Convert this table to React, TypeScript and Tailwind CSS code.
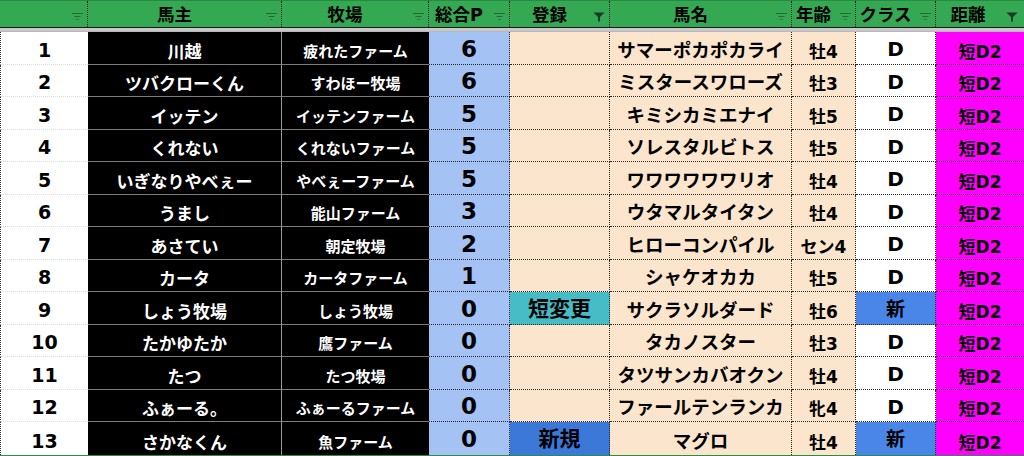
import React from "react";

type Row = {
  n: number;
  owner: string;
  farm: string;
  p: number;
  reg: string;
  horse: string;
  age: string;
  cls: string;
};

const rows: Row[] = [
  { n: 1, owner: "川越", farm: "疲れたファーム", p: 6, reg: "", horse: "サマーポカポカライ", age: "牡4", cls: "D" },
  { n: 2, owner: "ツバクローくん", farm: "すわほー牧場", p: 6, reg: "", horse: "ミスタースワローズ", age: "牡3", cls: "D" },
  { n: 3, owner: "イッテン", farm: "イッテンファーム", p: 5, reg: "", horse: "キミシカミエナイ", age: "牡5", cls: "D" },
  { n: 4, owner: "くれない", farm: "くれないファーム", p: 5, reg: "", horse: "ソレスタルビトス", age: "牡5", cls: "D" },
  { n: 5, owner: "いぎなりやべぇー", farm: "やべぇーファーム", p: 5, reg: "", horse: "ワワワワワワリオ", age: "牡4", cls: "D" },
  { n: 6, owner: "うまし", farm: "能山ファーム", p: 3, reg: "", horse: "ウタマルタイタン", age: "牡4", cls: "D" },
  { n: 7, owner: "あさてい", farm: "朝定牧場", p: 2, reg: "", horse: "ヒローコンパイル", age: "セン4", cls: "D" },
  { n: 8, owner: "カータ", farm: "カータファーム", p: 1, reg: "", horse: "シャケオカカ", age: "牡5", cls: "D" },
  { n: 9, owner: "しょう牧場", farm: "しょう牧場", p: 0, reg: "短変更", horse: "サクラソルダード", age: "牡6", cls: "新" },
  { n: 10, owner: "たかゆたか", farm: "鷹ファーム", p: 0, reg: "", horse: "タカノスター", age: "牡3", cls: "D" },
  { n: 11, owner: "たつ", farm: "たつ牧場", p: 0, reg: "", horse: "タツサンカバオクン", age: "牡4", cls: "D" },
  { n: 12, owner: "ふぁーる。", farm: "ふぁーるファーム", p: 0, reg: "", horse: "ファールテンランカ", age: "牝4", cls: "D" },
  { n: 13, owner: "さかなくん", farm: "魚ファーム", p: 0, reg: "新規", horse: "マグロ", age: "牡4", cls: "新" },
];

const FONT = "font-['DejaVu_Sans','Noto_Sans_CJK_JP',sans-serif]";

function FilterIcon({ active }: { active?: boolean }) {
  if (active) {
    return (
      <svg width="12" height="10" viewBox="0 0 12 10" className="block">
        <path d="M0.5 0.5 H11.5 L7 5 V9.5 H5 V5 Z" fill="#1d3b24" />
      </svg>
    );
  }
  return (
    <svg width="11" height="8" viewBox="0 0 11 8" className="block">
      <rect x="0" y="0" width="11" height="1" fill="#2a6439" />
      <rect x="2.5" y="3" width="6" height="1" fill="#2a6439" />
      <rect x="4.5" y="6" width="2" height="1" fill="#2a6439" />
    </svg>
  );
}

function HeaderCell({ label, active, last, iconW }: { label: string; active?: boolean; last?: boolean; iconW?: string }) {
  return (
    <div className={`flex items-center h-full ${last ? "" : "border-r border-dotted border-[#1f1f1f]"}`}>
      <div className="flex-1 text-center text-[17.5px] font-bold text-black leading-none pt-[3px]">{label}</div>
      <div className={`${iconW ?? "w-[20px]"} flex justify-center pt-[6px]`}>
        <FilterIcon active={active} />
      </div>
    </div>
  );
}

function DataRow({ r, h33, last }: { r: Row; h33: boolean; last: boolean }) {
  const bLight = last ? "" : "border-b border-[#dcdcdc]";
  const bGray = last ? "" : "border-b border-[#7d7d7d]";
  const bDot = last ? "" : "border-b border-dotted border-[#2a2a2a]";
  const regBg =
    r.reg === "短変更" ? "bg-[#46bdc6]" : r.reg === "新規" ? "bg-[#3c78d8]" : "bg-[#fce5cd]";
  const clsBg = r.cls === "新" ? "bg-[#4a86e8]" : "bg-white";
  return (
    <div
      className={`grid grid-cols-[88px_194px_147px_81px_100px_182px_64px_80px_88px] ${h33 ? "h-[33px]" : "h-[32px]"}`}
    >
      <div className={`flex justify-center items-end pb-[4px] leading-none bg-white text-[19px] font-bold text-black border-l border-dotted border-l-[#333] ${bLight}`}>
        {r.n}
      </div>
      <div className={`flex justify-center items-end pb-[3px] leading-none bg-black text-white text-[17px] font-bold border-r border-r-[#9a9a9a] ${bGray}`}>
        {r.owner}
      </div>
      <div className={`flex justify-center items-end pb-[4px] leading-none bg-black text-white text-[15px] font-bold ${bGray}`}>
        {r.farm}
      </div>
      <div className={`flex justify-center items-center pt-[2px] leading-none bg-[#a4c2f4] text-black text-[23px] font-bold border-r border-dotted border-r-[#2a2a2a] ${bDot}`}>
        {r.p}
      </div>
      <div className={`flex justify-center items-center pt-[2px] leading-none text-black text-[21px] font-bold border-r border-dotted border-r-[#2a2a2a] ${regBg} ${bDot}`}>
        {r.reg}
      </div>
      <div className={`flex justify-center items-end pb-[4px] leading-none bg-[#fce5cd] text-black text-[18.5px] font-bold border-r border-dotted border-r-[#2a2a2a] ${bDot}`}>
        {r.horse}
      </div>
      <div className={`flex justify-center items-end pb-[3px] leading-none bg-[#fce5cd] text-black text-[17px] font-bold border-r border-dotted border-r-[#2a2a2a] ${bDot}`}>
        {r.age}
      </div>
      <div className={`flex justify-center items-center pt-[2px] leading-none text-black font-bold border-r border-dotted border-r-[#2a2a2a] ${clsBg} ${r.cls === "新" ? "text-[19px]" : "text-[20px]"} ${bDot}`}>
        {r.cls}
      </div>
      <div className={`flex justify-center items-end pb-[3px] leading-none bg-[#ff00ff] text-black text-[17px] font-bold ${bDot}`}>
        短D2
      </div>
    </div>
  );
}

export default function App() {
  return (
    <div className={`w-[1024px] h-[456px] overflow-hidden bg-white ${FONT}`}>
      <div className="grid grid-cols-[88px_194px_147px_81px_100px_182px_64px_80px_88px] h-[28px] bg-[#35a853] border-t border-[#2a8a43] border-b border-b-[#1c1c1c]">
        <HeaderCell label="" />
        <HeaderCell label="馬主" />
        <HeaderCell label="牧場" />
        <HeaderCell label="総合P" />
        <HeaderCell label="登録" active />
        <HeaderCell label="馬名" />
        <HeaderCell label="年齢" />
        <HeaderCell label="クラス" />
        <HeaderCell label="距離" active last iconW="w-[24px]" />
      </div>
      <div className="h-[4px] bg-[#c9c9cb] border-b border-[#b5b5b8]" />
      <div className="flex flex-col">
        {rows.map((r, i) => (
          <DataRow key={r.n} r={r} h33={i % 2 === 0} last={i === rows.length - 1} />
        ))}
      </div>
      <div className="h-[1px] bg-[#2e8b45]" />
    </div>
  );
}
